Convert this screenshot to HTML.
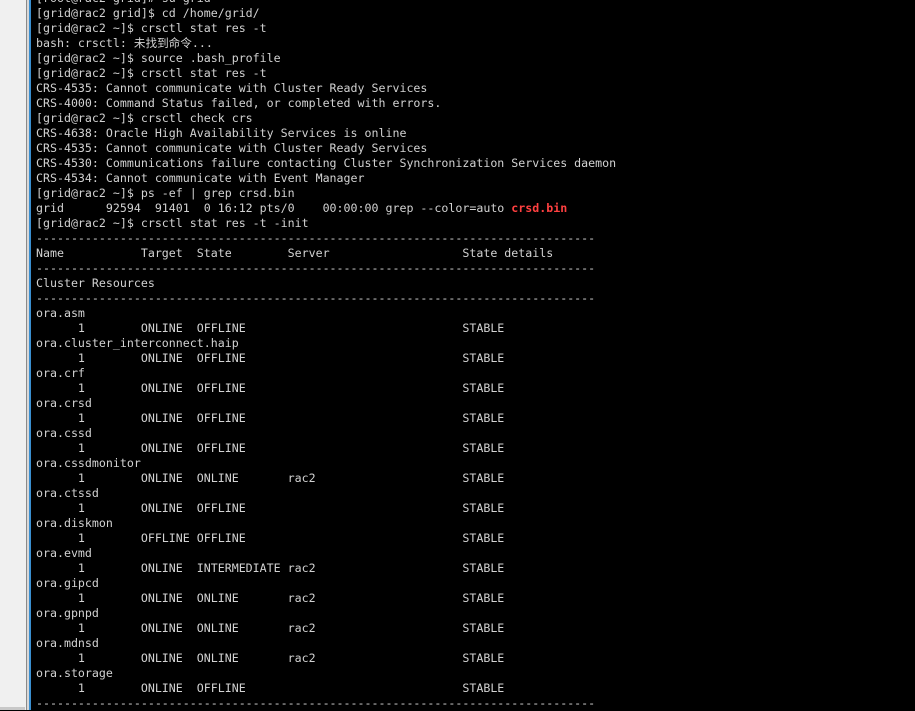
<!DOCTYPE html>
<html><head><meta charset="utf-8"><style>
html,body{margin:0;padding:0;width:915px;height:710px;overflow:hidden;background:#000;}
#l1{position:absolute;left:0;top:0;width:26px;height:710px;background:#f0f0f0;}
#l1b{position:absolute;left:0;top:707px;width:25px;height:3px;background:#c8c8c8;}
#l2{position:absolute;left:26px;top:0;width:1px;height:710px;background:#8a8a8a;}
#l3{position:absolute;left:27px;top:0;width:2px;height:710px;background:#d8d8d8;}
#l4{position:absolute;left:29px;top:0;width:2px;height:710px;background:#3a8fd0;}
pre{position:absolute;left:36px;top:-9.5px;margin:0;font-family:"DejaVu Sans Mono","Liberation Mono","Noto Sans CJK SC",monospace;font-size:11.62px;line-height:15px;color:#d2d2d2;}
.r{color:#ff4040;font-weight:bold;}
</style></head><body>
<div id="l1"></div><div id="l1b"></div><div id="l2"></div><div id="l3"></div><div id="l4"></div>
<pre>[root@rac2 grid]# su grid
[grid@rac2 grid]$ cd /home/grid/
[grid@rac2 ~]$ crsctl stat res -t
bash: crsctl: 未找到命令...
[grid@rac2 ~]$ source .bash_profile
[grid@rac2 ~]$ crsctl stat res -t
CRS-4535: Cannot communicate with Cluster Ready Services
CRS-4000: Command Status failed, or completed with errors.
[grid@rac2 ~]$ crsctl check crs
CRS-4638: Oracle High Availability Services is online
CRS-4535: Cannot communicate with Cluster Ready Services
CRS-4530: Communications failure contacting Cluster Synchronization Services daemon
CRS-4534: Cannot communicate with Event Manager
[grid@rac2 ~]$ ps -ef | grep crsd.bin
grid      92594  91401  0 16:12 pts/0    00:00:00 grep --color=auto <span class="r">crsd.bin</span>
[grid@rac2 ~]$ crsctl stat res -t -init
--------------------------------------------------------------------------------
Name           Target  State        Server                   State details
--------------------------------------------------------------------------------
Cluster Resources
--------------------------------------------------------------------------------
ora.asm
      1        ONLINE  OFFLINE                               STABLE
ora.cluster_interconnect.haip
      1        ONLINE  OFFLINE                               STABLE
ora.crf
      1        ONLINE  OFFLINE                               STABLE
ora.crsd
      1        ONLINE  OFFLINE                               STABLE
ora.cssd
      1        ONLINE  OFFLINE                               STABLE
ora.cssdmonitor
      1        ONLINE  ONLINE       rac2                     STABLE
ora.ctssd
      1        ONLINE  OFFLINE                               STABLE
ora.diskmon
      1        OFFLINE OFFLINE                               STABLE
ora.evmd
      1        ONLINE  INTERMEDIATE rac2                     STABLE
ora.gipcd
      1        ONLINE  ONLINE       rac2                     STABLE
ora.gpnpd
      1        ONLINE  ONLINE       rac2                     STABLE
ora.mdnsd
      1        ONLINE  ONLINE       rac2                     STABLE
ora.storage
      1        ONLINE  OFFLINE                               STABLE
--------------------------------------------------------------------------------
</pre>
</body></html>
